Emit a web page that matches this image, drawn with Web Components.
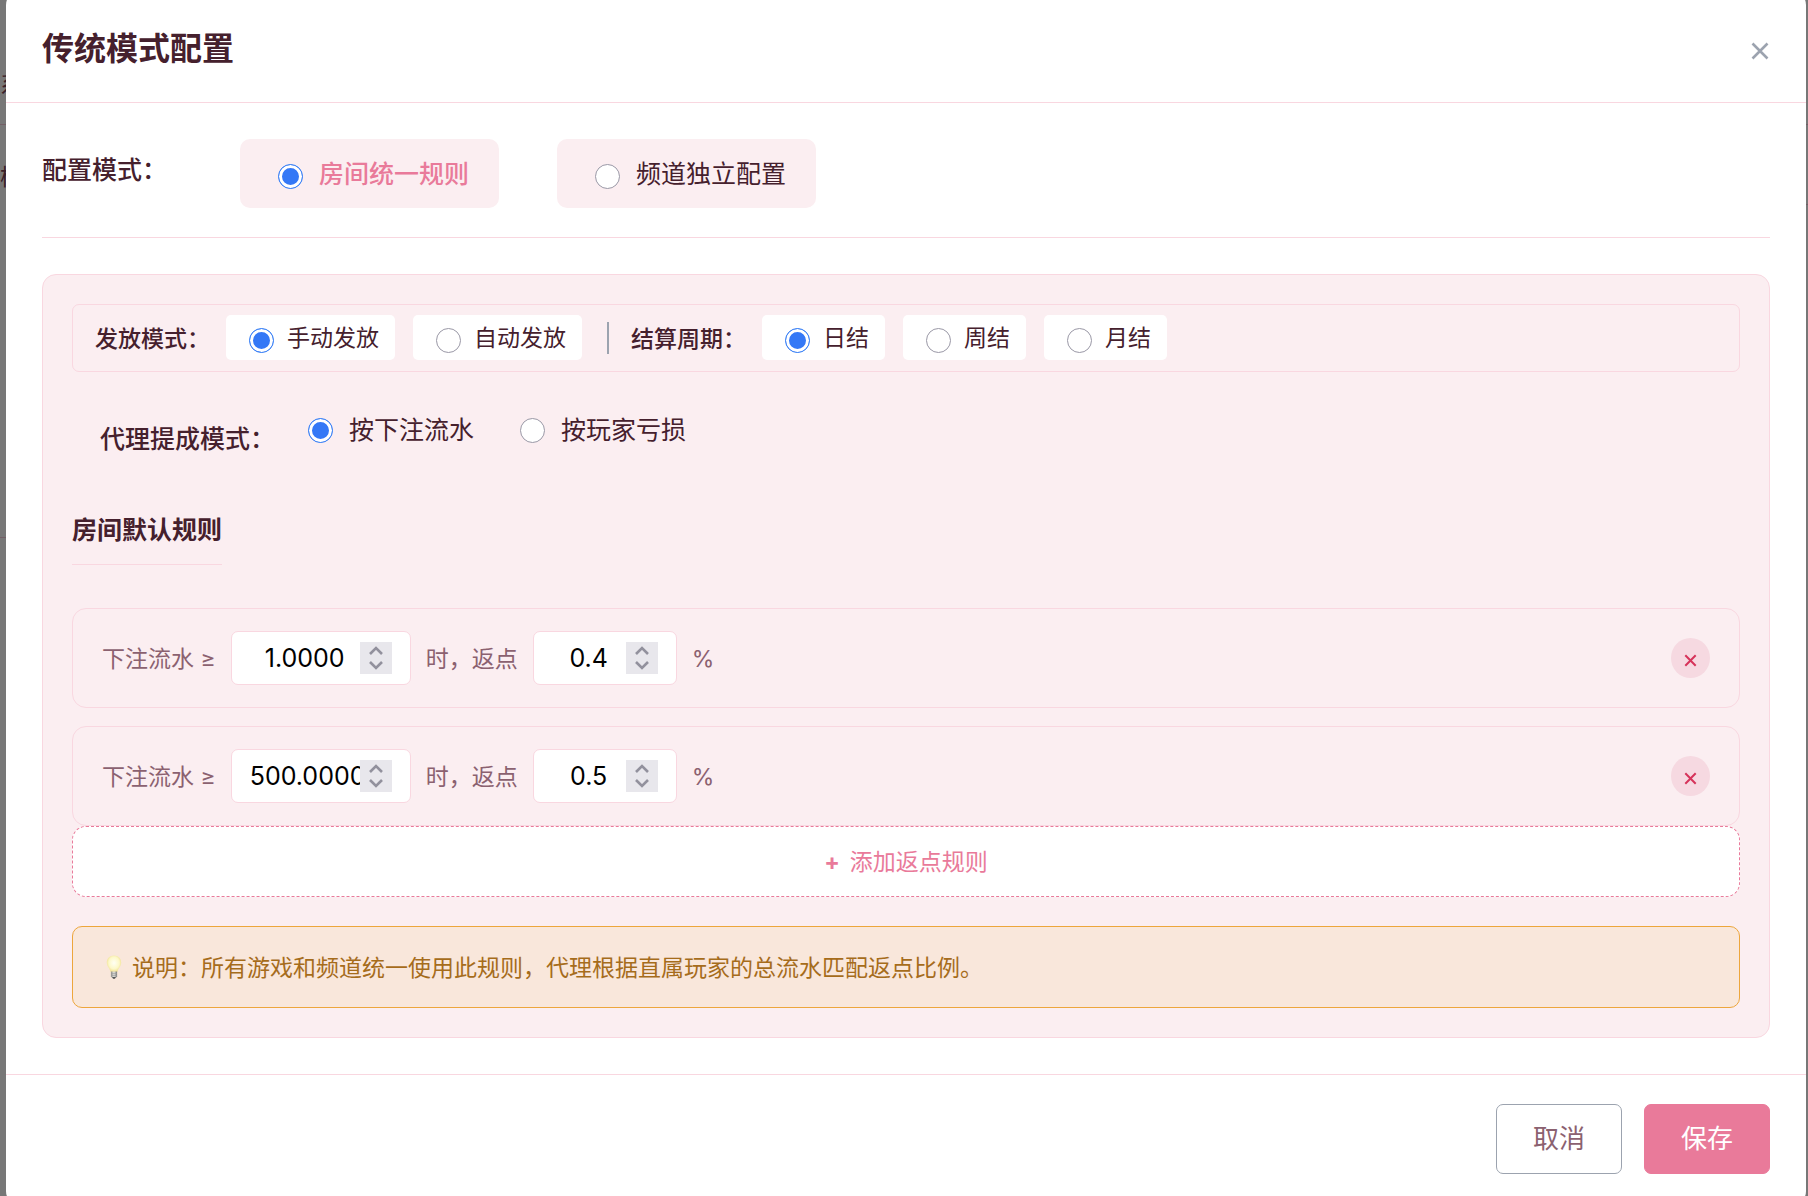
<!DOCTYPE html>
<html lang="zh-CN">
<head>
<meta charset="utf-8">
<meta name="viewport" content="width=device-width, initial-scale=1">
<title>传统模式配置</title>
<style>
	:root {
		--ink: #45202d;
		--muted: #8b6170;
		--pink: #e97a9a;
		--line: #f9d7e0;
		--soft: #fbeef1;
		--gray: #9ca3af;
	}
	body {
		margin: 0;
		color: var(--ink);
		font-family: Inter, "Noto Sans CJK SC", sans-serif;
		font-size: 23px;
		line-height: 36px;
	}
</style>
</head>
<body>
<config-page></config-page>

<script>
class BaseElement extends HTMLElement {
	constructor() {
		super();
		this.attachShadow({mode: 'open'});
	}

	connectedCallback() {
		if (!this.shadowRoot.firstChild) {
			const template = document.createElement('template');
			template.innerHTML = this.getStyle() + this.getTemplate();
			this.shadowRoot.appendChild(template.content.cloneNode(true));
			this.ready();
		}
	}

	ready() {}
}

/* radio with its label, look is "card", "chip" or plain */
class RadioOption extends BaseElement {
	getTemplate() {
		return `
			<label>
				<input type="radio" name="${this.getAttribute('name')}" ${this.hasAttribute('checked') ? 'checked' : ''}>
				<span><slot></slot></span>
			</label>
		`;
	}

	getStyle() {
		return `
			<style>
				:host {
					display: block;
					font-size: 25px;
				}
				label {
					display: flex;
					align-items: center;
					gap: 16px;
					cursor: pointer;
					white-space: nowrap;
				}
				input {
					appearance: none;
					flex: none;
					box-sizing: border-box;
					width: 25px;
					height: 25px;
					margin: 0;
					border: 1px solid #9a98a6;
					border-radius: 50%;
					background: #fff;
				}
				input:checked {
					border-color: #3b82f6;
					background: #3478f6;
					box-shadow: inset 0 0 0 3px #fff;
				}
				:host([look="card"]) label {
					padding: 17px 30px 16px 38px;
					border-radius: 10px;
					background: var(--soft);
				}
				:host([look="card"]) input,
				:host([look="chip"]) input {
					margin-top: 4px;
				}
				:host([look="card"][checked]) {
					color: var(--pink);
					font-weight: 500;
				}
				:host([look="chip"]) {
					font-size: 23px;
				}
				:host([look="chip"]) label {
					gap: 13px;
					padding: 5px 16px 4px 23px;
					border-radius: 5px;
					background: #fff;
				}
			</style>
		`;
	}

	ready() {
		this.input = this.shadowRoot.querySelector('input');
		this.input.addEventListener('change', () => {
			const name = this.getAttribute('name');
			// native grouping does not cross shadow roots
			this.getRootNode().querySelectorAll(`radio-option[name="${name}"]`).forEach(option => {
				option.input.checked = option === this;
				option.toggleAttribute('checked', option === this);
			});
		});
	}
}
customElements.define('radio-option', RadioOption);

class RebateRule extends BaseElement {
	getTemplate() {
		return `
			<label for="amount">下注流水 ≥</label>
			<input id="amount" type="number" step="any" value="${this.getAttribute('amount')}">
			<label for="rate">时，返点</label>
			<input id="rate" type="number" step="0.1" value="${this.getAttribute('rate')}">
			<span>%</span>
			<button type="button" aria-label="删除">
				<svg width="13" height="13" viewBox="0 0 13 13"><path d="M1.3 1.3 11.7 11.7M11.7 1.3 1.3 11.7"/></svg>
			</button>
		`;
	}

	getStyle() {
		return `
			<style>
				:host {
					display: flex;
					align-items: center;
					gap: 15px;
					padding: 22px 29px;
					border: 1px solid var(--line);
					border-radius: 14px;
					color: var(--muted);
				}
				label, span {
					padding-top: 2px;
				}
				input {
					box-sizing: border-box;
					width: 144px;
					height: 54px;
					padding: 0 18px;
					border: 1px solid var(--line);
					border-radius: 7px;
					background: #fff;
					color: #000;
					font-family: inherit;
					font-size: 25px;
					text-align: center;
				}
				#amount {
					width: 180px;
				}
				input::-webkit-inner-spin-button {
					appearance: none;
					opacity: 1;
					width: 32px;
					height: 32px;
					margin: 0;
					background: #e8e7ec url("data:image/svg+xml,%3Csvg xmlns='http://www.w3.org/2000/svg' width='32' height='32' fill='none' stroke='%2392919d' stroke-width='2.6'%3E%3Cpath d='M10 12l6-6 6 6M10 20l6 6 6-6'/%3E%3C/svg%3E") center no-repeat;
				}
				button {
					display: flex;
					align-items: center;
					justify-content: center;
					width: 39px;
					height: 40px;
					margin-left: auto;
					padding: 5px 0 0;
					border: 0;
					border-radius: 50%;
					background: #f6d9e1;
					cursor: pointer;
				}
				path {
					fill: none;
					stroke: #d6335a;
					stroke-width: 2;
				}
			</style>
		`;
	}

	ready() {
		this.shadowRoot.querySelector('button').addEventListener('click', () => this.remove());
	}
}
customElements.define('rebate-rule', RebateRule);

class NoteBox extends BaseElement {
	getTemplate() {
		return `
			<svg width="16" height="24" viewBox="0 0 16 24">
				<defs>
					<radialGradient id="glow" cx=".5" cy=".45" r=".6">
						<stop offset="0" stop-color="#fffff4"/>
						<stop offset=".6" stop-color="#fdf8c8"/>
						<stop offset="1" stop-color="#ecd982"/>
					</radialGradient>
					<linearGradient id="base">
						<stop offset="0" stop-color="#8c8c88"/>
						<stop offset=".5" stop-color="#e3e3dd"/>
						<stop offset="1" stop-color="#777"/>
					</linearGradient>
				</defs>
				<path d="M8 .5C3.700.5.800 3.600.8 7.400c0 3.800 3 5.500 3.900 9.600h6.600c.9-4.100 3.900-5.800 3.900-9.600C15.200 3.600 12.300.5 8 .5z" fill="url(#glow)"/>
				<path d="M4.900 16.500h6.200v4.800L9.800 23H6.200l-1.300-1.700z" fill="url(#base)"/>
				<path d="M5 18.600h6M5 20.500h6" stroke="#999" stroke-width=".6"/>
				<path d="M6.200 22h3.600l-.8 1.700H7z" fill="#555"/>
			</svg>
			<p><slot></slot></p>
		`;
	}

	getStyle() {
		return `
			<style>
				:host {
					display: flex;
					align-items: center;
					gap: 10px;
					padding: 22px 33px;
					border: 1px solid #eda63c;
					border-radius: 10px;
					background: #f9e7db;
					color: #a66c1b;
				}
				svg {
					flex: none;
				}
				p {
					margin: 0;
					padding-top: 2px;
					line-height: 34px;
				}
			</style>
		`;
	}
}
customElements.define('note-box', NoteBox);

class DialogBox extends BaseElement {
	getTemplate() {
		return `
			<header>
				<h2><slot name="title"></slot></h2>
				<button type="button" aria-label="关闭">
					<svg width="18" height="18" viewBox="0 0 18 18"><path d="M1.500 1.500 16.500 16.500M16.500 1.500 1.500 16.500"/></svg>
				</button>
			</header>
			<main><slot></slot></main>
			<footer><slot name="actions"></slot></footer>
		`;
	}

	getStyle() {
		return `
			<style>
				:host {
					display: block;
					border-radius: 14px;
					background: #fff;
				}
				header {
					display: flex;
					align-items: center;
					justify-content: space-between;
					padding: 36px 36px 31px;
					border-bottom: 1px solid var(--line);
				}
				h2 {
					margin: 0;
					font-size: 32px;
					line-height: 44px;
					font-weight: 600;
				}
				button {
					display: flex;
					padding: 3px 1px 0;
					border: 0;
					background: none;
					cursor: pointer;
				}
				path {
					fill: none;
					stroke: var(--gray);
					stroke-width: 2.6;
				}
				main {
					padding: 36px;
				}
				footer {
					display: flex;
					justify-content: flex-end;
					gap: 22px;
					padding: 29px 36px 31px;
					border-top: 1px solid var(--line);
				}
			</style>
		`;
	}
}
customElements.define('dialog-box', DialogBox);

/* the dimmed page that stays visible on both sides of the dialog */
class PageBackdrop extends BaseElement {
	getTemplate() {
		return `
			<div class="side">
				<div class="head">系</div>
				<div class="block">模</div>
			</div>
			<div class="side">
				<div class="head"></div>
				<div class="row"></div>
			</div>
		`;
	}

	getStyle() {
		return `
			<style>
				:host {
					display: flex;
					justify-content: space-between;
					background: #777;
					color: #3a2029;
					overflow: hidden;
				}
				.side {
					width: 24px;
				}
				.head, .block, .row {
					box-sizing: border-box;
					border-bottom: 1px solid #735f66;
				}
				.head {
					height: 125px;
					padding-top: 67px;
				}
				.block {
					height: 413px;
					padding-top: 34px;
				}
				.row {
					height: 80px;
				}
			</style>
		`;
	}
}
customElements.define('page-backdrop', PageBackdrop);

class ConfigPage extends BaseElement {
	getTemplate() {
		return `
			<page-backdrop></page-backdrop>
			<dialog-box>
				<span slot="title">传统模式配置</span>

				<div class="mode" role="radiogroup" aria-labelledby="mode">
					<strong id="mode">配置模式：</strong>
					<radio-option look="card" name="mode" checked>房间统一规则</radio-option>
					<radio-option look="card" name="mode">频道独立配置</radio-option>
				</div>

				<section>
					<div class="payout">
						<strong id="grant">发放模式：</strong>
						<div class="chips" role="radiogroup" aria-labelledby="grant">
							<radio-option look="chip" name="grant" checked>手动发放</radio-option>
							<radio-option look="chip" name="grant">自动发放</radio-option>
						</div>
						<i></i>
						<strong id="cycle">结算周期：</strong>
						<div class="chips" role="radiogroup" aria-labelledby="cycle">
							<radio-option look="chip" name="cycle" checked>日结</radio-option>
							<radio-option look="chip" name="cycle">周结</radio-option>
							<radio-option look="chip" name="cycle">月结</radio-option>
						</div>
					</div>

					<div class="commission" role="radiogroup" aria-labelledby="commission">
						<strong id="commission">代理提成模式：</strong>
						<radio-option name="commission" checked>按下注流水</radio-option>
						<radio-option name="commission">按玩家亏损</radio-option>
					</div>

					<h3>房间默认规则</h3>
					<div class="rules">
						<rebate-rule amount="1.0000" rate="0.4"></rebate-rule>
						<rebate-rule amount="500.0000" rate="0.5"></rebate-rule>
					</div>
					<button type="button" class="add"><b>+</b>添加返点规则</button>
					<note-box>说明：所有游戏和频道统一使用此规则，代理根据直属玩家的总流水匹配返点比例。</note-box>
				</section>

				<button type="button" class="action" slot="actions">取消</button>
				<button type="button" class="action save" slot="actions">保存</button>
			</dialog-box>
		`;
	}

	getStyle() {
		return `
			<style>
				:host {
					display: grid;
					grid-template-rows: 100vh;
					height: 100vh;
					overflow: hidden;
				}
				page-backdrop, dialog-box {
					grid-area: 1 / 1;
				}
				dialog-box {
					align-self: center;
					margin: 0 2px 0 6px;
				}
				strong {
					font-weight: 500;
					white-space: nowrap;
				}
				.mode {
					display: flex;
					align-items: flex-start;
					gap: 58px;
					margin-bottom: 36px;
					padding-bottom: 29px;
					border-bottom: 1px solid var(--line);
				}
				.mode strong {
					width: 140px;
					padding-top: 13px;
					font-size: 25px;
				}
				section {
					padding: 29px;
					border: 1px solid var(--line);
					border-radius: 14px;
					background: var(--soft);
				}
				.payout {
					display: flex;
					align-items: center;
					padding: 10px 22px 11px;
					border: 1px solid var(--line);
					border-radius: 7px;
				}
				.payout strong {
					width: 131px;
					padding-top: 2px;
				}
				.chips {
					display: flex;
					gap: 18px;
				}
				.payout i {
					width: 2px;
					height: 32px;
					margin: 0 22px 0 25px;
					background: var(--gray);
				}
				.commission {
					display: flex;
					align-items: flex-start;
					gap: 46px;
					margin: 40px 29px 55px 28px;
				}
				.commission strong {
					width: 162px;
					padding-top: 9px;
					font-size: 25px;
				}
				h3 {
					width: fit-content;
					margin: 0 0 43px;
					padding-bottom: 16px;
					border-bottom: 1px solid var(--line);
					font-size: 25px;
					font-weight: 600;
				}
				.rules {
					display: flex;
					flex-direction: column;
					gap: 18px;
				}
				button {
					font-family: inherit;
					line-height: 36px;
					cursor: pointer;
				}
				.add {
					display: flex;
					justify-content: center;
					gap: 10px;
					width: 100%;
					margin-bottom: 29px;
					padding: 17px 0 16px;
					border: 1px dashed var(--pink);
					border-radius: 14px;
					background: #fff;
					color: var(--pink);
					font-size: 23px;
				}
				.action {
					padding: 16px 36px;
					border: 1px solid var(--gray);
					border-radius: 7px;
					background: #fff;
					color: var(--muted);
					font-size: 26px;
				}
				.save {
					border-color: var(--pink);
					background: var(--pink);
					color: #fff;
				}
			</style>
		`;
	}

	ready() {
		this.shadowRoot.querySelector('.add').addEventListener('click', () => {
			const rule = document.createElement('rebate-rule');
			rule.setAttribute('amount', '0.0000');
			rule.setAttribute('rate', '0');
			this.shadowRoot.querySelector('.rules').appendChild(rule);
		});
	}
}
customElements.define('config-page', ConfigPage);
</script>
</body>
</html>
